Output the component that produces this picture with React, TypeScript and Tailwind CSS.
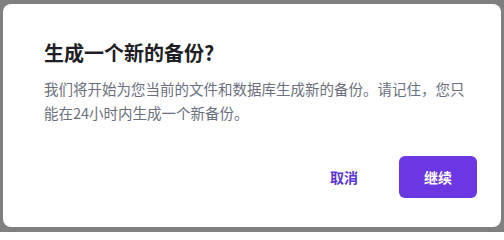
import React from 'react';

const App = () => {
  return (
    <div
      className="w-[504px] h-[232px] overflow-hidden bg-[#7f7f7f] pt-[4px] pl-[3px] pr-[3px]"
      style={{ fontFamily: '"Noto Sans CJK SC", "Noto Sans", sans-serif' }}
    >
      <div className="w-[498px] h-[223px] bg-white rounded-lg flex flex-col pt-[35px] pl-[41px] pr-6">
        <h2 className="text-[20px] leading-[28px] font-bold text-[#1e1e24]">生成一个新的备份?</h2>
        <p className="mt-[10px] pr-[10px] text-[14.5px] leading-[24px] text-[#6b6f7e]">
          我们将开始为您当前的文件和数据库生成新的备份。请记住，您只能在24小时内生成一个新备份。
        </p>
        <div className="mt-[31px] flex justify-end gap-4">
          <button className="w-[78px] h-[42px] rounded-md text-[14px] font-bold text-[#5b34d6]">取消</button>
          <button className="w-[78px] h-[42px] rounded-md bg-[#6a37e2] text-[14px] font-bold text-white">继续</button>
        </div>
      </div>
    </div>
  );
};

export default App;
